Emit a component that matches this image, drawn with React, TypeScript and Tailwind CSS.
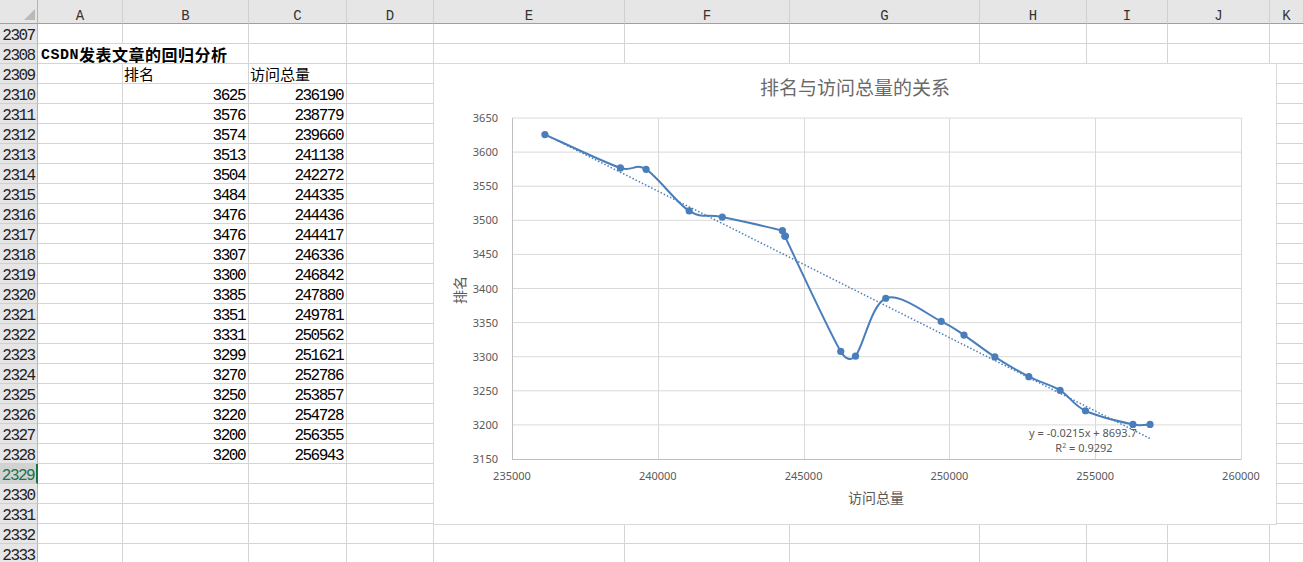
import React from "react";

const COLS = ["A", "B", "C", "D", "E", "F", "G", "H", "I", "J", "K"];

// 排名 / 访问总量 pairs, rows 2310–2328
const DATA: [number, number][] = [
  [3625, 236190],
  [3576, 238779],
  [3574, 239660],
  [3513, 241138],
  [3504, 242272],
  [3484, 244335],
  [3476, 244436],
  [3476, 244417],
  [3307, 246336],
  [3300, 246842],
  [3385, 247880],
  [3351, 249781],
  [3331, 250562],
  [3299, 251621],
  [3270, 252786],
  [3250, 253857],
  [3220, 254728],
  [3200, 256355],
  [3200, 256943],
];

const GRID =
  "grid grid-cols-[38px_85px_126px_98px_87px_191px_165px_190px_107px_81px_102px_1fr]";
const FONT = "font-['Liberation_Mono',monospace]";
const CJK = "font-['Noto_Sans_CJK_SC',sans-serif]";

const FIRST_ROW = 2307;
const LAST_ROW = 2333;
const SELECTED_ROW = 2329;

function Cell({ children, className = "" }: { children?: React.ReactNode; className?: string }) {
  return (
    <div
      className={`flex min-h-0 items-end overflow-visible whitespace-nowrap border-b border-r border-[#d4d4d4] ${className}`}
    >
      {children}
    </div>
  );
}

function NumCell({ value }: { value: number }) {
  return (
    <Cell className="justify-end pr-[3px]">
      <span className={`${FONT} text-[16px] leading-[14px] tracking-[-1.5px] text-black`}>{value}</span>
    </Cell>
  );
}

function TextCell({ text }: { text: string }) {
  return (
    <Cell className="justify-start pl-[1px]">
      <span className={`${CJK} text-[15px] leading-[18px] text-black`}>{text}</span>
    </Cell>
  );
}

function RowHeader({ n }: { n: number }) {
  const sel = n === SELECTED_ROW;
  return (
    <div
      className={`flex items-end justify-center border-b border-b-[#d0d0d0] ${
        sel
          ? "border-r-2 border-r-[#217346] bg-[#d2d2d2] text-[#217346]"
          : "border-r border-r-[#b4b4b4] bg-[#e6e6e6] text-[#222]"
      }`}
    >
      <span className={`${FONT} text-[16px] leading-[14px] tracking-[-1.5px]`}>{n}</span>
    </div>
  );
}

function Row({ n }: { n: number }) {
  const idx = n - 2310;
  const cells: React.ReactNode[] = [];
  if (n === 2308) {
    cells.push(
      <Cell key="A" className="border-r-0 pl-[3px]">
        <span className="flex h-[18px] items-end font-bold tracking-[0.5px] text-black">
          <span className={`${FONT} text-[15px] leading-[14px]`}>CSDN</span>
          <span className={`${CJK} text-[16px] leading-[18px]`}>发表文章的回归分析</span>
        </span>
      </Cell>
    );
  } else {
    cells.push(<Cell key="A" />);
  }
  if (n === 2309) {
    cells.push(<TextCell key="B" text="排名" />);
    cells.push(<TextCell key="C" text="访问总量" />);
  } else if (idx >= 0 && idx < DATA.length) {
    cells.push(<NumCell key="B" value={DATA[idx][0]} />);
    cells.push(<NumCell key="C" value={DATA[idx][1]} />);
  } else {
    cells.push(<Cell key="B" />);
    cells.push(<Cell key="C" />);
  }
  for (const c of COLS.slice(3)) cells.push(<Cell key={c} />);
  return (
    <div className={`${GRID} h-[20px] grid-rows-[20px]`}>
      <RowHeader n={n} />
      {cells}
    </div>
  );
}

type Pt = [number, number];

// smoothed series: Catmull-Rom handles, each capped at half of its segment
function smoothPath(pts: Pt[]) {
  const f = (n: number) => n.toFixed(2);
  let d = `M${f(pts[0][0])},${f(pts[0][1])}`;
  for (let i = 0; i < pts.length - 1; i++) {
    const p0 = pts[i - 1] ?? pts[i];
    const p1 = pts[i];
    const p2 = pts[i + 1];
    const p3 = pts[i + 2] ?? p2;
    const seg = Math.hypot(p2[0] - p1[0], p2[1] - p1[1]);
    const cap = (vx: number, vy: number): Pt => {
      const len = Math.hypot(vx, vy);
      const max = seg / 2;
      if (len > max && len > 0) return [(vx * max) / len, (vy * max) / len];
      return [vx, vy];
    };
    const h1 = cap((p2[0] - p0[0]) / 6, (p2[1] - p0[1]) / 6);
    const h2 = cap((p3[0] - p1[0]) / 6, (p3[1] - p1[1]) / 6);
    d += ` C${f(p1[0] + h1[0])},${f(p1[1] + h1[1])} ${f(p2[0] - h2[0])},${f(p2[1] - h2[1])} ${f(p2[0])},${f(p2[1])}`;
  }
  return d;
}

function Chart() {
  const L = 512;
  const R = 1241;
  const T = 118;
  const B = 459;
  const px = (v: number) => L + ((v - 235000) / 25000) * (R - L);
  const py = (v: number) => B - ((v - 3150) / 500) * (B - T);
  const pts: Pt[] = DATA.map(([r, v]) => [px(v) - 1.8, py(r) - 0.5]);
  const d = smoothPath(pts);

  const yTicks = [3650, 3600, 3550, 3500, 3450, 3400, 3350, 3300, 3250, 3200, 3150];
  const xTicks = [235000, 240000, 245000, 250000, 255000, 260000];
  const blue = "#4a7ebb";
  const label = "#595959";
  const sans = "'Noto Sans','Noto Sans CJK SC',sans-serif";

  const trendStart: Pt = [pts[0][0], 439 - (1151 - pts[0][0]) * 0.5027];
  const trendEnd: Pt = [1151, 439];

  return (
    <svg width="844" height="462" viewBox="433 63 844 462" className="block">
      <rect x="433.5" y="63.5" width="843" height="461" fill="#ffffff" stroke="#d9d9d9" />
      <text x="855" y="95" textAnchor="middle" fontSize="19" fill="#6a6a6a" fontFamily={sans}>
        排名与访问总量的关系
      </text>

      {/* gridlines */}
      {yTicks.slice(0, -1).map((t) => (
        <line key={t} x1={L} x2={R} y1={py(t)} y2={py(t)} stroke="#d9d9d9" strokeWidth="1" />
      ))}
      {xTicks.slice(1).map((t) => (
        <line
          key={t}
          x1={Math.round(px(t)) + 0.5}
          x2={Math.round(px(t)) + 0.5}
          y1={T}
          y2={B}
          stroke="#d9d9d9"
          strokeWidth="1"
        />
      ))}
      {/* axes */}
      <line x1={L + 0.5} x2={L + 0.5} y1={T} y2={B + 0.5} stroke="#bfbfbf" />
      <line x1={L} x2={R + 0.5} y1={B + 0.5} y2={B + 0.5} stroke="#bfbfbf" />

      {yTicks.map((t) => (
        <text key={t} x="498" y={py(t) + 4} textAnchor="end" fontSize="11" fill={label} fontFamily={sans}>
          {t}
        </text>
      ))}
      {xTicks.map((t) => (
        <text key={t} x={px(t)} y="480" textAnchor="middle" fontSize="11" fill={label} fontFamily={sans}>
          {t}
        </text>
      ))}

      <text x="876" y="503" textAnchor="middle" fontSize="14" fill={label} fontFamily={sans}>
        访问总量
      </text>
      <text
        x="460"
        y="295"
        transform="rotate(-90 460 290)"
        textAnchor="middle"
        fontSize="14"
        fill={label}
        fontFamily={sans}
      >
        排名
      </text>

      {/* linear trendline */}
      <line
        x1={trendStart[0]}
        y1={trendStart[1]}
        x2={trendEnd[0]}
        y2={trendEnd[1]}
        stroke={blue}
        strokeWidth="1.5"
        strokeDasharray="1.5 2"
      />

      <path d={d} fill="none" stroke={blue} strokeWidth="2" strokeLinejoin="round" />
      {pts.map(([x, y], i) => (
        <circle key={i} cx={x} cy={y} r="3.6" fill={blue} />
      ))}

      <text x="1083" y="437" textAnchor="middle" fontSize="11" fill={label} fontFamily={sans}>
        y = -0.0215x + 8693.7
      </text>
      <text x="1084" y="452" textAnchor="middle" fontSize="11" fill={label} fontFamily={sans}>
        R
        <tspan fontSize="7" dy="-4">
          2
        </tspan>
        <tspan dy="4"> = 0.9292</tspan>
      </text>
    </svg>
  );
}

export default function App() {
  const rows: number[] = [];
  for (let n = FIRST_ROW; n <= LAST_ROW; n++) rows.push(n);
  return (
    <div className="relative h-[562px] w-[1304px] overflow-hidden bg-white">
      <div className={`${GRID} h-[24px] grid-rows-[24px]`}>
        <div className="flex items-end justify-end border-b border-r border-b-[#a0a0a0] border-r-[#b4b4b4] bg-[#e6e6e6] pb-[3px] pr-[2px]">
          <svg width="11" height="11" viewBox="0 0 11 11">
            <polygon points="11,0 11,11 0,11" fill="#bababa" />
          </svg>
        </div>
        {COLS.map((c) => (
          <div
            key={c}
            className="flex items-end justify-center border-b border-r border-b-[#a0a0a0] border-r-[#d0d0d0] bg-[#e6e6e6]"
          >
            <span className={`${FONT} text-[14px] leading-[14px] text-[#333]`}>{c}</span>
          </div>
        ))}
      </div>
      {rows.map((n) => (
        <Row key={n} n={n} />
      ))}
      <div className="absolute left-[433px] top-[63px]">
        <Chart />
      </div>
    </div>
  );
}
